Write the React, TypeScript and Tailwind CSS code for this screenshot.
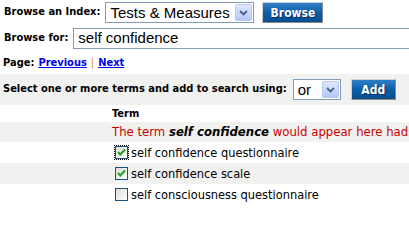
import React from 'react';

const tahoma = { fontFamily: '"DejaVu Sans Condensed", "DejaVu Sans", sans-serif' };

function Chevron() {
  return (
    <svg width="9" height="6" viewBox="0 0 9 6">
      <path d="M1 1 L4.5 4.5 L8 1" fill="none" stroke="#4d6185" strokeWidth="1.8" />
    </svg>
  );
}

function FakeSelect({ value, width }: { value: string; width: string }) {
  return (
    <div className={`flex h-[21px] ${width} shrink-0 items-center border border-[#7f9db9] bg-white pl-[4px] pr-[1px]`}>
      <span className="flex-1 whitespace-nowrap text-[15px] leading-none text-black" style={{ fontFamily: '"Liberation Sans", Arial, sans-serif' }}>
        {value}
      </span>
      <span className="flex h-[17px] w-[17px] items-center justify-center rounded-[2px] border border-[#b9c9ef] bg-gradient-to-b from-[#dfe8ff] to-[#b4c7f7]">
        <Chevron />
      </span>
    </div>
  );
}

function BlueButton({ label, width }: { label: string; width: string }) {
  return (
    <button
      className={`flex h-[21px] ${width} shrink-0 items-center justify-center border border-[#d0d0d0] border-r-[#8a8a8a] border-b-[#8a8a8a] bg-gradient-to-b from-[#2f7fc8] via-[#0a5ea9] to-[#084d8f] text-[12px] font-bold text-white`}
      style={{ ...tahoma, textShadow: '1px 1px 0 #06305a' }}
    >
      {label}
    </button>
  );
}

function Checkbox({ checked, focused }: { checked: boolean; focused?: boolean }) {
  return (
    <span className={`flex h-[15px] w-[15px] shrink-0 items-center justify-center ${focused ? 'outline outline-1 outline-dotted outline-black -outline-offset-1' : ''}`}>
      <span className="flex h-[13px] w-[13px] items-center justify-center border border-[#1c5180] bg-gradient-to-br from-[#dcdcd7] to-white">
        {checked && (
          <svg width="9" height="9" viewBox="0 0 9 9">
            <path d="M1 4 L3.3 6.5 L8 1.5" fill="none" stroke="#21a121" strokeWidth="2" />
          </svg>
        )}
      </span>
    </span>
  );
}

const terms = [
  { label: 'self confidence questionnaire', checked: true, focused: true },
  { label: 'self confidence scale', checked: true },
  { label: 'self consciousness questionnaire', checked: false },
];

export default function App() {
  return (
    <div className="h-[206px] w-[409px] overflow-hidden whitespace-nowrap bg-white text-black" style={tahoma}>
      <div className="flex h-[24px] items-center pl-[4px] pt-[1px]">
        <span className="shrink-0 text-[11px] font-bold">Browse an Index:</span>
        <div className="ml-[5px]">
          <FakeSelect value="Tests & Measures" width="w-[149px]" />
        </div>
        <div className="ml-[8px]">
          <BlueButton label="Browse" width="w-[61px]" />
        </div>
      </div>

      <div className="mt-[4px] flex h-[21px] items-center pl-[4px]">
        <span className="shrink-0 text-[11px] font-bold">Browse for:</span>
        <div className="ml-[5px] flex h-[21px] w-[360px] shrink-0 items-center border border-[#7f9db9] pl-[4px] text-[15px]" style={{ fontFamily: '"Liberation Sans", Arial, sans-serif' }}>
          self confidence
        </div>
      </div>

      <div className="mt-[4px] flex h-[20px] items-center pl-[3px] text-[11px] font-bold">
        <span>Page:</span>
        <a href="#" className="ml-[4px] text-[#0000ee] underline">Previous</a>
        <span className="mx-[4px] font-normal text-[#e08a1e]">|</span>
        <a href="#" className="text-[#0000ee] underline">Next</a>
      </div>

      <div className="mt-[1px] flex h-[31px] items-center bg-[#f1f1f0] pl-[3px]">
        <span className="shrink-0 text-[11px] font-bold">Select one or more terms and add to search using:</span>
        <div className="ml-[6px]">
          <FakeSelect value="or" width="w-[48px]" />
        </div>
        <div className="ml-[10px]">
          <BlueButton label="Add" width="w-[45px]" />
        </div>
      </div>

      <div className="flex h-[17px] items-end pl-[112px] text-[11px] font-bold">Term</div>

      <div className="flex h-[20px] items-center bg-[#f1f1f0] pl-[112px] text-[13px] text-[#cc0000]">
        The term&nbsp;<span className="font-bold italic text-black">self confidence</span>&nbsp;would appear here had
      </div>

      {terms.map((t, i) => (
        <div
          key={t.label}
          className={`flex h-[21px] items-center pl-[114px] text-[12.7px] ${i % 2 === 1 ? 'bg-[#f1f1f0]' : 'bg-white'}`}
        >
          <Checkbox checked={t.checked} focused={t.focused} />
          <span className="ml-[2px]">{t.label}</span>
        </div>
      ))}
    </div>
  );
}
